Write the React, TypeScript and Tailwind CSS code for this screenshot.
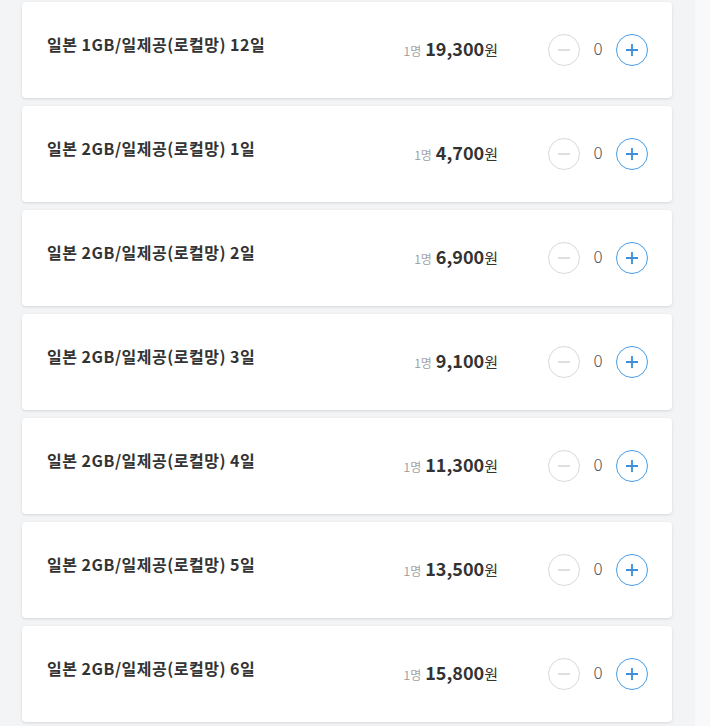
const items = [
  { name: '일본 1GB/일제공(로컬망) 12일', price: '19,300' },
  { name: '일본 2GB/일제공(로컬망) 1일', price: '4,700' },
  { name: '일본 2GB/일제공(로컬망) 2일', price: '6,900' },
  { name: '일본 2GB/일제공(로컬망) 3일', price: '9,100' },
  { name: '일본 2GB/일제공(로컬망) 4일', price: '11,300' },
  { name: '일본 2GB/일제공(로컬망) 5일', price: '13,500' },
  { name: '일본 2GB/일제공(로컬망) 6일', price: '15,800' },
]

function Counter() {
  return (
    <div className="flex items-center">
      <button className="w-8 h-8 rounded-full border border-[#d9d9d9] flex items-center justify-center">
        <svg width="14" height="14" viewBox="0 0 14 14">
          <path d="M1 7h12" stroke="#d6d6d6" strokeWidth="1.6" />
        </svg>
      </button>
      <span className="w-9 text-center text-[17px] font-light text-[#555] -mt-1">0</span>
      <button className="w-8 h-8 rounded-full border border-[#4a9de3] flex items-center justify-center">
        <svg width="14" height="14" viewBox="0 0 14 14">
          <path d="M1 7h12M7 1v12" stroke="#3b8fdc" strokeWidth="1.8" />
        </svg>
      </button>
    </div>
  )
}

export default function App() {
  return (
    <div className="flex min-h-[726px] font-['Noto_Sans_CJK_KR','Noto_Sans',sans-serif]">
      <div className="w-[695px] bg-[#f3f4f6] pl-[22px] pr-[23px] pt-[2px] flex flex-col gap-2">
        {items.map((item) => (
          <div
            key={item.name}
            className="h-24 bg-white rounded-[4px] shadow-[0_1px_3px_rgba(0,0,0,0.12)] flex items-center justify-between pl-[25px] pr-6"
          >
            <div className="pb-3 text-[16px] tracking-[0.5px] font-semibold text-[#333]">{item.name}</div>
            <div className="flex items-center">
              <div className="flex items-baseline text-[#333] -mt-1">
                <span className="text-[12px] text-[#a3a3a3] mr-1">1명</span>
                <span className="text-[18px] font-bold">{item.price}</span>
                <span className="text-[15px]">원</span>
              </div>
              <div className="ml-[50px]">
                <Counter />
              </div>
            </div>
          </div>
        ))}
      </div>
      <div className="flex-1 bg-[#f9f9fb]" />
    </div>
  )
}
